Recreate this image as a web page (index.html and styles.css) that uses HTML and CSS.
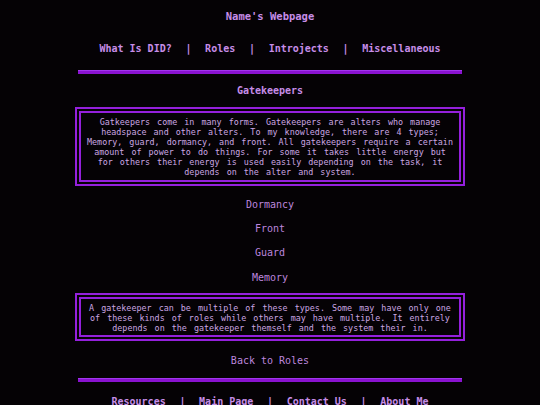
FILE: index.html
```html
<!DOCTYPE html>
<html>
<head>
<meta charset="utf-8">
<title>Gatekeepers</title>
<link rel="stylesheet" href="styles.css">
</head>
<body>
<div class="page">
  <h1 class="title">Name's Webpage</h1>
  <nav class="nav">
    <a href="#">What Is DID?</a><span class="sep">|</span>
    <a href="#">Roles</a><span class="sep">|</span>
    <a href="#">Introjects</a><span class="sep">|</span>
    <a href="#">Miscellaneous</a>
  </nav>
  <div class="rule"></div>
  <h2 class="heading">Gatekeepers</h2>
  <div class="box box-one">
    <p>Gatkeepers come in many forms. Gatekeepers are alters who manage headspace and other alters. To my knowledge, there are 4 types; Memory, guard, dormancy, and front. All gatekeepers require a certain amount of power to do things. For some it takes little energy but for others their energy is used easily depending on the task, it depends on the alter and system.</p>
  </div>
  <ul class="types">
    <li><a href="#">Dormancy</a></li>
    <li><a href="#">Front</a></li>
    <li><a href="#">Guard</a></li>
    <li><a href="#">Memory</a></li>
  </ul>
  <div class="box box-two">
    <p>A gatekeeper can be multiple of these types. Some may have only one of these kinds of roles while others may have multiple. It entirely depends on the gatekeeper themself and the system their in.</p>
  </div>
  <a class="back" href="#">Back to Roles</a>
  <div class="rule rule-bottom"></div>
  <nav class="nav footer">
    <a href="#">Resources</a><span class="sep">|</span>
    <a href="#">Main Page</a><span class="sep">|</span>
    <a href="#">Contact Us</a><span class="sep">|</span>
    <a href="#">About Me</a>
  </nav>
</div>
</body>
</html>
```

FILE: styles.css
```css
html, body {
  margin: 0;
  padding: 0;
  background: #050205;
}

body {
  font-family: "DejaVu Sans Mono", "Liberation Mono", monospace;
  color: #c78de8;
  overflow: hidden;
}

a {
  color: inherit;
  text-decoration: none;
}

.page {
  width: 384px;
  margin: 0 auto;
  display: flex;
  flex-direction: column;
  align-items: stretch;
  text-align: center;
}

.title {
  margin: 0;
  padding-top: 9px;
  font-size: 10.5px;
  line-height: 14px;
  font-weight: bold;
}

.nav {
  margin-top: 19px;
  display: flex;
  justify-content: center;
  gap: 13.7px;
  font-size: 10px;
  line-height: 14px;
  font-weight: bold;
  white-space: nowrap;
}

.rule {
  margin-top: 14px;
  height: 4px;
  background: #8a12d0;
  box-shadow: inset 0 1px 0 #a235ee;
}

.heading {
  margin: 10px 0 0;
  font-size: 10px;
  line-height: 14px;
  font-weight: bold;
}

.box {
  margin: 9px -3px 0 -3px;
  border: 6px double #9420dc;
  padding: 4px 2.5px 3px;
  color: #cba6e2;
}

.box p {
  margin: 0;
  font-size: 8.4px;
  line-height: 10px;
  word-spacing: 2px;
}

.types {
  list-style: none;
  margin: 12px 0 0;
  padding: 0;
  display: flex;
  flex-direction: column;
  gap: 10.2px;
  font-size: 10px;
  line-height: 14px;
  color: #bd86de;
}

.box-two {
  margin-top: 8px;
  padding-bottom: 2px;
}

.back {
  margin-top: 13px;
  font-size: 10px;
  line-height: 14px;
  color: #bd86de;
}

.rule-bottom {
  margin-top: 10px;
}

.footer {
  margin-top: 13px;
}
```
